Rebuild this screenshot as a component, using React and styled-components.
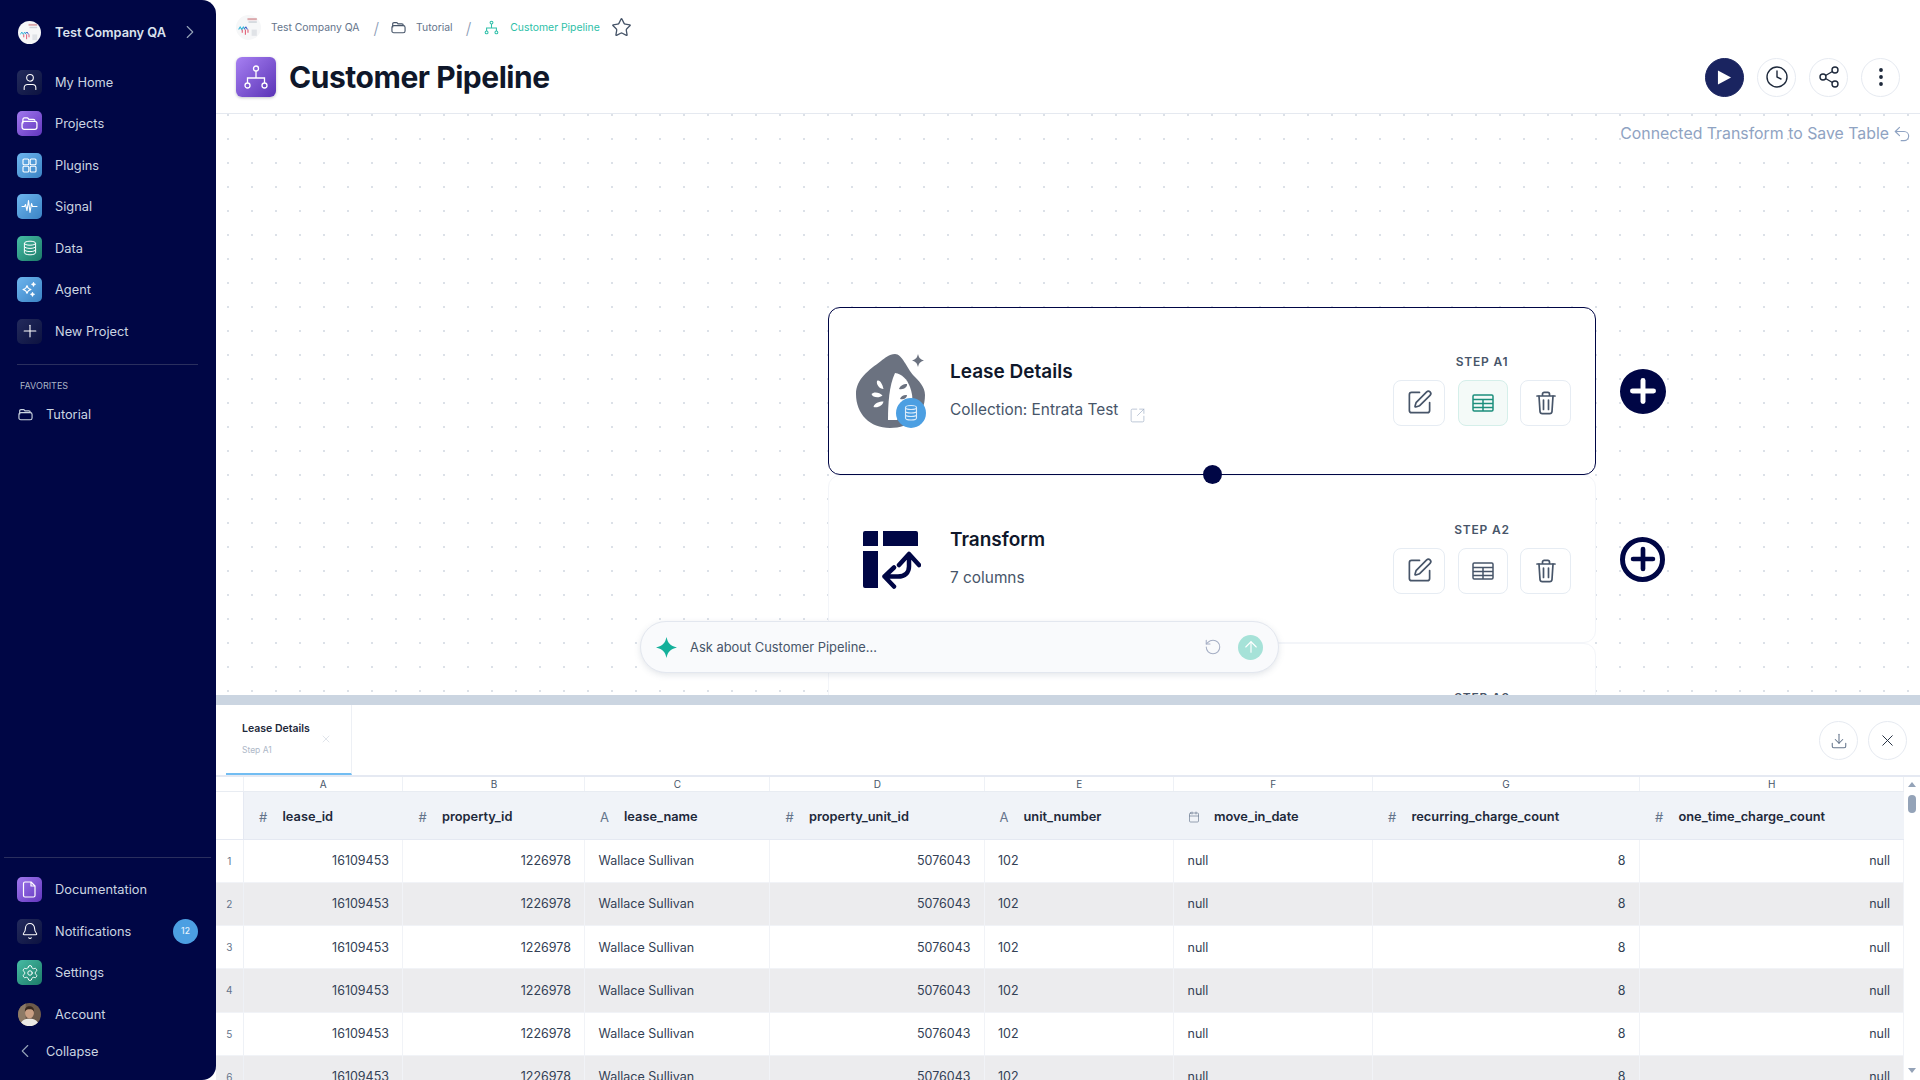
import React from "react";
import styled, { createGlobalStyle } from "styled-components";
import {
  User, Plus, Bell, Settings, ChevronRight, ChevronLeft, Clock, Share2,
  EllipsisVertical, Undo2, RotateCcw, ArrowUp, Star, X, Download, SquarePen,
  SquareArrowOutUpRight, Calendar,
} from "lucide-react";

const NAVY = "#000645";

const GlobalStyle = createGlobalStyle`
  html, body { margin: 0; padding: 0; height: 100%; background: #fff; }
  body { font-family: "Inter", "Liberation Sans", sans-serif; overflow: hidden; }
`;

const Page = styled.div`
  display: flex;
  width: 1920px;
  height: 1080px;
  overflow: hidden;
`;

const Sidebar = styled.aside`
  flex: 0 0 216px;
  height: 1080px;
  box-sizing: border-box;
  background: ${NAVY};
  border-radius: 0 14px 14px 0;
  display: flex;
  flex-direction: column;
  color: #cbd5e1;
`;

const CompanyRow = styled.div`
  display: flex;
  align-items: center;
  height: 61.5px;
  padding: 3px 0 0 18px;
  box-sizing: border-box;
  font-size: 12.8px;
  font-weight: 600;
  color: #dbe3ee;
`;

const CompanyName = styled.span`
  margin-left: 14px;
  white-space: nowrap;
`;

const CompanyChevron = styled.span`
  margin-left: auto;
  margin-right: 15px;
  display: flex;
  color: #94a3b8;
`;

const NavGroup = styled.nav`
  display: flex;
  flex-direction: column;
`;

const NavItem = styled.div`
  display: flex;
  align-items: center;
  height: 41.5px;
  padding: 0 18px 0 17px;
  gap: 13px;
  font-size: 12.8px;
  color: #cbd5e1;
`;

const tones = {
  dark: "linear-gradient(135deg, #232b5c, #0c1240)",
  purple: "linear-gradient(135deg, #a078ee, #6236bd)",
  blue: "linear-gradient(135deg, #6db5ee, #3b83c4)",
  green: "linear-gradient(135deg, #46bca4, #1c7b68)",
  none: "none",
};

const Tile = styled.span`
  flex: 0 0 25px;
  width: 25px;
  height: 25px;
  border-radius: 5px;
  background: ${(p) => tones[p.$tone]};
  display: flex;
  align-items: center;
  justify-content: center;
  color: #fff;
`;

const Divider = styled.div`
  height: 1px;
  background: #2a2f5e;
  margin: ${(p) => p.$margin};
`;

const FavLabel = styled.div`
  font-size: 9px;
  color: #aab4c5;
  padding-left: 20px;
  line-height: 11px;
  margin-top: 15px;
`;

const FavItem = styled.div`
  display: flex;
  align-items: center;
  gap: 13px;
  padding-left: 18px;
  margin-top: 13px;
  font-size: 12.8px;
  height: 20px;
`;

const SideBottom = styled.div`
  margin-top: auto;
`;

const Badge = styled.span`
  margin-left: auto;
  width: 25px;
  height: 25px;
  border-radius: 50%;
  background: #4c9fe2;
  color: #e6f2fc;
  font-size: 8.5px;
  font-weight: 500;
  display: flex;
  align-items: center;
  justify-content: center;
`;

const Collapse = styled.div`
  display: flex;
  align-items: center;
  gap: 10px;
  padding-left: 14px;
  height: 28px;
  margin: 2px 0 15px;
  font-size: 12.8px;
  color: #cbd5e1;
`;

const Main = styled.main`
  flex: 1;
  min-width: 0;
  display: flex;
  flex-direction: column;
`;

const TopBar = styled.header`
  flex: 0 0 114px;
  box-sizing: border-box;
  border-bottom: 1px solid #e5e9f0;
  padding: 15.5px 20px 0 20px;
  display: flex;
  flex-direction: column;
`;

const Crumbs = styled.div`
  display: flex;
  align-items: center;
  height: 24px;
  font-size: 10.4px;
  color: #64748b;
`;

const Crumb = styled.span`
  margin-left: ${(p) => p.$ml || 0}px;
  color: ${(p) => (p.$active ? "#2dbfa8" : "#64748b")};
  display: flex;
`;

const Slash = styled.span`
  margin-left: ${(p) => p.$ml}px;
  font-size: 16px;
  color: #8a9ab5;
  font-weight: 300;
`;

const TitleRow = styled.div`
  display: flex;
  align-items: center;
  margin-top: 17.5px;
  gap: 13px;
`;

const TitleIcon = styled.span`
  width: 40px;
  height: 40px;
  border-radius: 6px;
  background: linear-gradient(135deg, #a780f2, #5a33b6);
  box-shadow: 0 1px 3px rgba(15, 23, 42, 0.25);
  display: flex;
  align-items: center;
  justify-content: center;
`;

const Title = styled.h1`
  margin: 0;
  font-size: 30px;
  line-height: 40px;
  font-weight: 700;
  letter-spacing: -0.46px;
  color: #0f172a;
`;

const Actions = styled.div`
  margin-left: auto;
  display: flex;
  gap: 13px;
`;

const RoundBtn = styled.button`
  width: 39px;
  height: 39px;
  padding: 0;
  border-radius: 50%;
  border: 1px solid ${(p) => (p.$solid ? "#1a2460" : "#e6eaf1")};
  background: ${(p) => (p.$solid ? "#1a2460" : "#fff")};
  color: ${(p) => (p.$solid ? "#fff" : "#1e293b")};
  display: flex;
  align-items: center;
  justify-content: center;
`;

const Canvas = styled.section`
  flex: 0 0 581px;
  position: relative;
  overflow: hidden;
  background-color: #fff;
  background-image: radial-gradient(circle, #dce1e8 1px, transparent 1.2px);
  background-size: 24px 24px;
  background-position: 0 -11px;
`;

const StatusNote = styled.div`
  position: absolute;
  top: 10px;
  right: 8px;
  display: flex;
  align-items: center;
  gap: 3px;
  font-size: 15.85px;
  line-height: 20px;
  color: #8fa3c2;
`;

const NodeStack = styled.div`
  position: absolute;
  left: 612px;
  top: 193px;
  display: flex;
  flex-direction: column;
`;

const NodeRow = styled.div`
  display: flex;
  align-items: center;
  gap: 24px;
`;

const Node = styled.div`
  width: 768px;
  height: 168px;
  box-sizing: border-box;
  border-radius: 12px;
  background: #fff;
  border: ${(p) => (p.$selected ? `1.5px solid ${NAVY}` : "1px solid #f3f5f9")};
  padding: 0 24px 0 27px;
  display: flex;
  align-items: center;
  position: relative;
`;

const NodeIcon = styled.span`
  flex: 0 0 72px;
  display: flex;
  justify-content: center;
  margin-right: 22px;
`;

const NodeText = styled.div`
  display: flex;
  flex-direction: column;
  gap: 15px;
  flex: 1;
  margin-top: -2px;
`;

const NodeTitle = styled.div`
  font-size: 19px;
  line-height: 24px;
  font-weight: 600;
  color: #0f172a;
`;

const NodeSub = styled.div`
  font-size: 15.4px;
  line-height: 22px;
  color: #475569;
  display: flex;
  align-items: center;
  gap: 11px;
`;

const SubLink = styled.span`
  display: flex;
  color: #a3b1c6;
  transform: translateY(6px);
`;

const StepBlock = styled.div`
  display: flex;
  flex-direction: column;
  align-items: center;
  gap: 11px;
  margin-top: -2px;
`;

const StepLabel = styled.div`
  font-size: 12px;
  line-height: 14px;
  font-weight: 600;
  letter-spacing: 0.8px;
  color: #475569;
`;

const StepButtons = styled.div`
  display: flex;
  gap: 12.5px;
`;

const StepBtn = styled.button`
  width: ${(p) => p.$w}px;
  height: 46px;
  padding: 0;
  box-sizing: border-box;
  border-radius: 8px;
  border: 1px solid ${(p) => (p.$active ? "#d5efea" : "#e6ecf3")};
  background: ${(p) => (p.$active ? "#f4faf8" : "#fff")};
  color: ${(p) => (p.$active ? "#1c8f7c" : "#475569")};
  display: flex;
  align-items: center;
  justify-content: center;
`;

const Connector = styled.span`
  position: absolute;
  left: 374px;
  bottom: -10px;
  width: 19px;
  height: 19px;
  border-radius: 50%;
  background: ${NAVY};
  z-index: 2;
`;

const AddCircle = styled.span`
  flex: 0 0 45px;
  height: 45px;
  box-sizing: border-box;
  border-radius: 50%;
  background: ${(p) => (p.$filled ? NAVY : "#fff")};
  border: 5px solid ${NAVY};
  color: ${(p) => (p.$filled ? "#fff" : NAVY)};
  display: flex;
  align-items: center;
  justify-content: center;
`;

const ChatBox = styled.div`
  position: absolute;
  left: 424px;
  bottom: 22px;
  width: 639px;
  height: 52px;
  box-sizing: border-box;
  border-radius: 26px;
  border: 1px solid #e3e7ef;
  background: #f9fafc;
  box-shadow: 0 2px 6px rgba(100, 116, 139, 0.18);
  display: flex;
  align-items: center;
  padding: 0 15px;
  z-index: 3;
`;

const ChatText = styled.div`
  flex: 1;
  margin-left: 13px;
  font-size: 12.9px;
  color: #475569;
`;

const ChatReset = styled.span`
  display: flex;
  color: #a5aec4;
  margin-right: 16px;
`;

const ChatSend = styled.span`
  width: 25px;
  height: 25px;
  border-radius: 50%;
  background: #a6e2d8;
  color: #fff;
  display: flex;
  align-items: center;
  justify-content: center;
`;

const Splitter = styled.div`
  flex: 0 0 10px;
  background: #cbd5e1;
`;

const Panel = styled.section`
  flex: 1;
  min-height: 0;
  overflow: hidden;
  display: flex;
  flex-direction: column;
`;

const PanelHead = styled.div`
  flex: 0 0 72px;
  box-sizing: border-box;
  display: flex;
  align-items: flex-start;
  padding-left: 9.5px;
  border-bottom: 2px solid #e5e9f2;
`;

const Tab = styled.div`
  width: 126px;
  height: 70px;
  box-sizing: border-box;
  border-right: 1px solid #edf0f5;
  border-bottom: 2px solid #72bdf2;
  padding: 17px 0 0 16.5px;
  position: relative;
`;

const TabTitle = styled.div`
  font-size: 10.5px;
  line-height: 13px;
  font-weight: 600;
  color: #1e293b;
`;

const TabSub = styled.div`
  font-size: 8.5px;
  line-height: 11px;
  margin-top: 10px;
  color: #aeb8c8;
`;

const TabClose = styled.span`
  position: absolute;
  right: 19px;
  top: 28px;
  display: flex;
  color: #c2cad6;
`;

const PanelTools = styled.div`
  margin-left: auto;
  display: flex;
  gap: 10px;
  padding: 16px 13px 0 0;
`;

const TableWrap = styled.div`
  flex: 1;
  min-height: 0;
  display: flex;
  overflow: hidden;
`;

const Table = styled.div`
  flex: 0 0 1688px;
`;

const COLUMNS = "27.5px 159.5px 182px 185px 214.5px 189.5px 198.5px 267px 264.5px";

const LetterRow = styled.div`
  display: grid;
  grid-template-columns: ${COLUMNS};
  height: 14px;
  border-bottom: 1px solid #e8ecf2;
`;

const Letter = styled.div`
  font-size: 10px;
  line-height: 14px;
  text-align: center;
  padding-left: 1px;
  color: #475569;
  border-right: 1px solid #eef1f6;
`;

const HeadRow = styled.div`
  display: grid;
  grid-template-columns: ${COLUMNS};
  height: 46.5px;
  border-bottom: 1px solid #e5e9f2;
`;

const HeadCorner = styled.div`
  background: #fff;
  border-right: 1px solid #e5e9f2;
`;

const HeadCell = styled.div`
  background: #f0f3f8;
  display: flex;
  align-items: center;
  padding: 3px 0 0 14px;
  font-size: 12.8px;
  font-weight: 600;
  color: #1e293b;
`;

const TypeMark = styled.span`
  flex: 0 0 11px;
  margin-right: 14px;
  font-size: 13px;
  font-weight: 400;
  color: #64748b;
  display: flex;
  justify-content: center;
`;

const DataRow = styled.div`
  display: grid;
  grid-template-columns: ${COLUMNS};
  height: 43.25px;
  box-sizing: border-box;
  background: ${(p) => (p.$even ? "#ececee" : "#fff")};
  border-bottom: 1px solid #f1f3f7;
`;

const RowNum = styled.div`
  font-size: 10px;
  color: #64748b;
  display: flex;
  align-items: center;
  justify-content: center;
  border-right: 1px solid #eef1f6;
`;

const Cell = styled.div`
  font-size: 12.5px;
  color: #334155;
  display: flex;
  align-items: center;
  padding: 0 13px 0 13.5px;
  justify-content: ${(p) => (p.$right ? "flex-end" : "flex-start")};
  border-right: 1px solid #f1f3f7;
`;

const ScrollTrack = styled.div`
  flex: 0 0 16px;
  position: relative;
  background: #fff;
`;

const ScrollThumb = styled.div`
  position: absolute;
  left: 4px;
  top: 18px;
  width: 8px;
  height: 18px;
  border-radius: 4px;
  background: #94a3b8;
`;

const ScrollArrow = styled.div`
  position: absolute;
  left: 4px;
  ${(p) => (p.$down ? "top: 291px;" : "top: 5px;")}
  width: 0;
  height: 0;
  border-left: 4px solid transparent;
  border-right: 4px solid transparent;
  ${(p) => (p.$down ? "border-top: 5px solid #94a3b8;" : "border-bottom: 5px solid #94a3b8;")}
`;

const FolderIcon = ({ size = 16, color = "currentColor" }) => (
  <svg width={size} height={size} viewBox="0 0 16 16" fill="none" stroke={color} strokeWidth="1.2" strokeLinejoin="round">
    <path d="M1.8 8V4.200c0-.8.6-1.400 1.400-1.400h2.600c.5 0 .8.2 1.100.6l.5.7h4.200c.9 0 1.500.6 1.500 1.400" />
    <rect x="1" y="6" width="14" height="7.600" rx="2" />
  </svg>
);

const GridIcon = () => (
  <svg width="15" height="15" viewBox="0 0 15 15" fill="none" stroke="#fff" strokeWidth="1.100">
    <rect x="1" y="1" width="5.800" height="5.800" rx="1" />
    <rect x="8.200" y="1" width="5.800" height="5.800" rx="1" />
    <rect x="1" y="8.200" width="5.800" height="5.800" rx="1" />
    <rect x="8.200" y="8.200" width="5.800" height="5.800" rx="1" />
  </svg>
);

const WaveIcon = () => (
  <svg width="17" height="15" viewBox="0 0 17 15" fill="none" stroke="#fff" strokeWidth="1.100" strokeLinejoin="round" strokeLinecap="round">
    <path d="M1 7.500h2.500l1-2 1.500 6 1.500-10 1.500 12 1.500-9 1 3h4.500" />
  </svg>
);

const DbIcon = ({ size = 16, color = "#fff" }) => (
  <svg width={size} height={size} viewBox="0 0 16 16" fill="none" stroke={color} strokeWidth="1">
    <ellipse cx="8" cy="3.200" rx="5.600" ry="2" />
    <path d="M2.400 3.200v9.600c0 1.100 2.500 2 5.600 2s5.600-.9 5.600-2V3.200" />
    <path d="M2.400 6.400c0 1.100 2.500 2 5.600 2s5.600-.9 5.600-2M2.400 9.600c0 1.100 2.500 2 5.600 2s5.600-.9 5.600-2" />
  </svg>
);

const AgentIcon = () => (
  <svg width="17" height="17" viewBox="0 0 17 17" fill="none" stroke="#fff" strokeWidth="1.100" strokeLinejoin="round">
    <path d="M6 4.500c.5 2.600 1.300 3.400 4 4-2.700.6-3.500 1.400-4 4-.5-2.600-1.300-3.400-4-4 2.700-.6 3.500-1.400 4-4Z" />
    <path d="M12.500 1.500c.2 1.200.6 1.600 1.800 1.800-1.200.2-1.600.6-1.800 1.800-.2-1.200-.6-1.600-1.800-1.800 1.200-.2 1.600-.6 1.800-1.800Z" fill="#fff" />
    <path d="M11.500 11.500c.2 1.200.6 1.600 1.800 1.800-1.200.2-1.600.6-1.800 1.800-.2-1.200-.6-1.600-1.800-1.800 1.200-.2 1.600-.6 1.800-1.800Z" fill="#fff" />
  </svg>
);

const DocIcon = () => (
  <svg width="15" height="17" viewBox="0 0 15 17" fill="none" stroke="#fff" strokeWidth="1.200" strokeLinejoin="round">
    <path d="M3 1h6l4 4v9.500c0 .8-.6 1.500-1.500 1.500H3c-.9 0-1.500-.7-1.500-1.500v-12C1.500 1.700 2.100 1 3 1Z" />
    <path d="M9 1v4h4" />
  </svg>
);

const PipelineIcon = ({ size = 26, color = "#fff", stroke = 1.3 }) => (
  <svg width={size} height={size} viewBox="0 0 26 26" fill="none" stroke={color} strokeWidth={stroke}>
    <circle cx="13" cy="4.500" r="2.500" />
    <circle cx="4.500" cy="21.500" r="2.500" />
    <circle cx="21.500" cy="21.500" r="2.500" />
    <path d="M13 7v7M4.500 19v-5h17v5" />
  </svg>
);

const CompanyLogo = ({ size = 23 }) => (
  <svg width={size} height={size} viewBox="0 0 24 24">
    <circle cx="12" cy="12" r="12" fill="#f6f7f8" />
    <rect x="11" y="3" width="9" height="2" fill="#dba9ac" />
    <rect x="12" y="6" width="8" height="1.500" fill="#cfd4da" />
    <rect x="15" y="14" width="5" height="6" fill="#e0e3e7" />
    <path d="M2.500 14l1.500-2.500 1.500 2.500 1.500-2.500 1.500 2.500" fill="none" stroke="#35b6d8" strokeWidth="1" />
    <path d="M8 13l1.500-1.500 1.500 2.500" fill="none" stroke="#3b5cc4" strokeWidth="1" />
    <path d="M6 14v3M9 14v5M11.500 14v3" stroke="#e0566e" strokeWidth="1" />
  </svg>
);

const AccountAvatar = () => (
  <svg width="23" height="23" viewBox="0 0 24 24">
    <clipPath id="avatarClip"><circle cx="12" cy="12" r="12" /></clipPath>
    <g clipPath="url(#avatarClip)">
      <rect width="24" height="24" fill="#6d5a4a" />
      <rect width="8" height="24" fill="#8d7a66" />
      <path d="M2 24c1-6 5-7.500 10-7.500S21 18 22 24Z" fill="#eceae6" />
      <ellipse cx="12" cy="10.500" rx="4.600" ry="5.600" fill="#c99f83" />
      <path d="M7.200 9c-.2-4 2-5.500 4.800-5.500S17 5 16.800 9c-1-2-2.500-2.500-4.800-2.500S8.200 7 7.200 9Z" fill="#3a2a20" />
    </g>
  </svg>
);

const LeaseIcon = () => (
  <svg width="72" height="76" viewBox="0 0 72 76">
    <path d="M39 1C33 1 29 5 25 8 13 17 0 26 0 41c0 20 14 34 34 34 20 0 35-12 35-33 0-8-6-14-12-20C51 15 46 1 39 1Z" fill="#6b7280" />
    <path d="M39 20c7 1 12 6 15 14 2 6 3 11 2 15l-15 18H32c0-16 1-34 7-47Z" fill="#fff" />
    <path d="M43 36c1-3 4-5 8-5 .5 3-3 6-8 5ZM44 46c1-3 4-4.500 7-4 0 3-3 5-7 4Z" fill="#6b7280" />
    <path d="M21 28c2.500-2 5.500 3 6.500 8-4 0-7.500-4.500-6.500-8ZM15.500 41c2-2.500 8-2 11 1.500-3.500 3-10 2-11-1.500ZM17.500 54c1-4 5.500-5.500 10-5.500-.5 3.500-5.500 7-10 5.500Z" fill="#fff" />
    <path d="M62 1c1 4 2 5 6 6.500-4 1.500-5 2.500-6 6.500-1-4-2-5-6-6.500 4-1.500 5-2.500 6-6.500Z" fill="#6b7280" />
    <circle cx="55" cy="60" r="15" fill="#4c9fe2" />
    <g fill="none" stroke="#dcecfa" strokeWidth="1.100">
      <ellipse cx="55" cy="54.500" rx="5.500" ry="2" />
      <path d="M49.500 54.500v10.500c0 1.100 2.500 2 5.500 2s5.500-.9 5.500-2V54.500M49.500 58c0 1.100 2.500 2 5.500 2s5.500-.9 5.500-2M49.500 61.500c0 1.100 2.500 2 5.500 2s5.500-.9 5.500-2" />
    </g>
  </svg>
);

const TransformIcon = () => (
  <svg width="58" height="60" viewBox="0 -2 58 60" fill="none">
    <path d="M2 0h13v15H0V2a2 2 0 0 1 2-2ZM20 0h33a2 2 0 0 1 2 2v13H20ZM0 20h15v37H2a2 2 0 0 1-2-2Z" fill={NAVY} />
    <path d="M21.500 45.500H35c7 0 11-4 11-10V24M36 34l10-11 10 11M31 36.500l-9.500 9L31 55.500" stroke={NAVY} strokeWidth="4.500" strokeLinecap="round" strokeLinejoin="round" />
  </svg>
);

const TableIcon = () => (
  <svg width="22" height="18" viewBox="0 0 22 18" fill="none" stroke="currentColor" strokeWidth="1.500">
    <rect x="1" y="1" width="20" height="16" rx="1.200" />
    <path d="M1 5.500h20M1 9.500h20M1 13.500h20M11 5.500V17" />
  </svg>
);

const TrashIcon = () => (
  <svg width="20" height="24" viewBox="0 0 20 24" fill="none" stroke="currentColor" strokeWidth="1.700" strokeLinecap="round" strokeLinejoin="round">
    <path d="M1 5h18M6.500 4.500V3c0-1 .7-1.700 1.700-1.700h3.600c1 0 1.700.7 1.700 1.700v1.500" />
    <path d="M3 5l1 15.500c.1 1.200 1 2.200 2.300 2.200h7.400c1.300 0 2.200-1 2.300-2.200L17 5" />
    <path d="M7.500 9v9.500M12.500 9v9.500" />
  </svg>
);

const FourStar = () => (
  <svg width="21" height="21" viewBox="0 0 21 21">
    <path d="M10.500 0c1.300 6 3.500 8.700 10.500 10.500-7 1.800-9.200 4.500-10.500 10.500C9.200 15 7 12.300 0 10.500 7 8.700 9.200 6 10.500 0Z" fill="#14b09a" />
  </svg>
);

const mainNav = [
  { label: "My Home", tone: "dark", icon: <User size={20} strokeWidth={1.3} /> },
  { label: "Projects", tone: "purple", icon: <FolderIcon size={17} color="#fff" /> },
  { label: "Plugins", tone: "blue", icon: <GridIcon /> },
  { label: "Signal", tone: "blue", icon: <WaveIcon /> },
  { label: "Data", tone: "green", icon: <DbIcon /> },
  { label: "Agent", tone: "blue", icon: <AgentIcon /> },
  { label: "New Project", tone: "dark", icon: <Plus size={20} strokeWidth={1.3} /> },
];

const columns = [
  { letter: "A", name: "lease_id", type: "#" },
  { letter: "B", name: "property_id", type: "#" },
  { letter: "C", name: "lease_name", type: "A" },
  { letter: "D", name: "property_unit_id", type: "#" },
  { letter: "E", name: "unit_number", type: "A" },
  { letter: "F", name: "move_in_date", type: "date" },
  { letter: "G", name: "recurring_charge_count", type: "#" },
  { letter: "H", name: "one_time_charge_count", type: "#" },
];

const rowValues = [
  { v: "16109453", right: true },
  { v: "1226978", right: true },
  { v: "Wallace Sullivan" },
  { v: "5076043", right: true },
  { v: "102" },
  { v: "null" },
  { v: "8", right: true },
  { v: "null", right: true },
];

const steps = [
  { title: "Lease Details", step: "STEP A1", selected: true },
  { title: "Transform", step: "STEP A2" },
  { title: "", step: "STEP A3" },
];

const StepCard = ({ title, step, selected, children, icon }) => (
  <NodeRow>
    <Node $selected={selected}>
      <NodeIcon>{icon}</NodeIcon>
      <NodeText>
        <NodeTitle>{title}</NodeTitle>
        {children}
      </NodeText>
      <StepBlock>
        <StepLabel>{step}</StepLabel>
        <StepButtons>
          <StepBtn $w={52}><SquarePen size={27} strokeWidth={1.5} /></StepBtn>
          <StepBtn $w={50} $active={selected}><TableIcon /></StepBtn>
          <StepBtn $w={51}><TrashIcon /></StepBtn>
        </StepButtons>
      </StepBlock>
      {selected && <Connector />}
    </Node>
    <AddCircle $filled={selected}><Plus size={selected ? 36 : 34} strokeWidth={3.3} /></AddCircle>
  </NodeRow>
);

export default function App() {
  return (
    <Page>
      <GlobalStyle />
      <Sidebar>
        <CompanyRow>
          <CompanyLogo />
          <CompanyName>Test Company QA</CompanyName>
          <CompanyChevron><ChevronRight size={22} strokeWidth={1.2} /></CompanyChevron>
        </CompanyRow>
        <NavGroup>
          {mainNav.map((n) => (
            <NavItem key={n.label}>
              <Tile $tone={n.tone}>{n.icon}</Tile>
              {n.label}
            </NavItem>
          ))}
        </NavGroup>
        <Divider $margin="12px 18px 0 17px" />
        <FavLabel>FAVORITES</FavLabel>
        <FavItem>
          <FolderIcon size={15} />
          Tutorial
        </FavItem>
        <SideBottom>
          <Divider $margin="0 5px 11.500px 4px" />
          <NavGroup>
            <NavItem><Tile $tone="purple"><DocIcon /></Tile>Documentation</NavItem>
            <NavItem><Tile $tone="dark"><Bell size={18} strokeWidth={1.4} /></Tile>Notifications<Badge>12</Badge></NavItem>
            <NavItem><Tile $tone="green"><Settings size={18} strokeWidth={1.3} /></Tile>Settings</NavItem>
            <NavItem><Tile $tone="none"><AccountAvatar /></Tile>Account</NavItem>
          </NavGroup>
          <Collapse><ChevronLeft size={22} strokeWidth={1.2} color="#94a3b8" />Collapse</Collapse>
        </SideBottom>
      </Sidebar>

      <Main>
        <TopBar>
          <Crumbs>
            <CompanyLogo size={25} />
            <Crumb $ml={10}>Test Company QA</Crumb>
            <Slash $ml={14}>/</Slash>
            <Crumb $ml={12}><FolderIcon size={15} color="#475569" /></Crumb>
            <Crumb $ml={10}>Tutorial</Crumb>
            <Slash $ml={13}>/</Slash>
            <Crumb $ml={13}><PipelineIcon size={15} color="#2dbfa8" stroke={1.8} /></Crumb>
            <Crumb $ml={11} $active>Customer Pipeline</Crumb>
            <Crumb $ml={11}><Star size={21} color="#475569" strokeWidth={1.5} /></Crumb>
          </Crumbs>
          <TitleRow>
            <TitleIcon><PipelineIcon /></TitleIcon>
            <Title>Customer Pipeline</Title>
            <Actions>
              <RoundBtn $solid>
                <svg width="15" height="17" viewBox="0 0 16 18"><path d="M1 1.500 15 9 1 16.500Z" fill="#fff" /></svg>
              </RoundBtn>
              <RoundBtn><Clock size={24} strokeWidth={1.4} /></RoundBtn>
              <RoundBtn><Share2 size={24} strokeWidth={1.4} /></RoundBtn>
              <RoundBtn><EllipsisVertical size={24} strokeWidth={1.8} /></RoundBtn>
            </Actions>
          </TitleRow>
        </TopBar>

        <Canvas>
          <StatusNote>
            Connected Transform to Save Table
            <Undo2 size={20} strokeWidth={1.4} />
          </StatusNote>
          <NodeStack>
            <StepCard {...steps[0]} icon={<LeaseIcon />}>
              <NodeSub>
                Collection: Entrata Test
                <SubLink><SquareArrowOutUpRight size={17} strokeWidth={1} /></SubLink>
              </NodeSub>
            </StepCard>
            <StepCard {...steps[1]} icon={<TransformIcon />}>
              <NodeSub>7 columns</NodeSub>
            </StepCard>
            <StepCard {...steps[2]} />
          </NodeStack>
          <ChatBox>
            <FourStar />
            <ChatText>Ask about Customer Pipeline...</ChatText>
            <ChatReset><RotateCcw size={18} strokeWidth={1.4} /></ChatReset>
            <ChatSend><ArrowUp size={18} strokeWidth={1.5} /></ChatSend>
          </ChatBox>
        </Canvas>

        <Splitter />

        <Panel>
          <PanelHead>
            <Tab>
              <TabTitle>Lease Details</TabTitle>
              <TabSub>Step A1</TabSub>
              <TabClose><X size={12} strokeWidth={1} /></TabClose>
            </Tab>
            <PanelTools>
              <RoundBtn><Download size={18} strokeWidth={1.4} color="#64748b" /></RoundBtn>
              <RoundBtn><X size={19} strokeWidth={1.2} /></RoundBtn>
            </PanelTools>
          </PanelHead>
          <TableWrap>
            <Table>
              <LetterRow>
                <Letter />
                {columns.map((c) => <Letter key={c.letter}>{c.letter}</Letter>)}
              </LetterRow>
              <HeadRow>
                <HeadCorner />
                {columns.map((c) => (
                  <HeadCell key={c.name}>
                    <TypeMark>{c.type === "date" ? <Calendar size={12} strokeWidth={1.3} /> : c.type}</TypeMark>
                    {c.name}
                  </HeadCell>
                ))}
              </HeadRow>
              {[1, 2, 3, 4, 5, 6].map((n) => (
                <DataRow key={n} $even={n % 2 === 0}>
                  <RowNum>{n}</RowNum>
                  {rowValues.map((cell, i) => (
                    <Cell key={i} $right={cell.right}>{cell.v}</Cell>
                  ))}
                </DataRow>
              ))}
            </Table>
            <ScrollTrack>
              <ScrollArrow />
              <ScrollThumb />
              <ScrollArrow $down />
            </ScrollTrack>
          </TableWrap>
        </Panel>
      </Main>
    </Page>
  );
}
